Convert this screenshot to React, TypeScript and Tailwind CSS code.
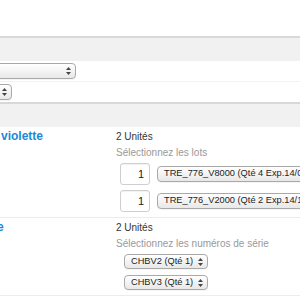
import React from 'react';

const Arrows = () => (
  <svg width="5" height="8" viewBox="0 0 5 8" className="shrink-0">
    <polygon points="0,3 2.5,0 5,3" fill="#444" />
    <polygon points="0,5 2.5,8 5,5" fill="#444" />
  </svg>
);

function MacSelect({
  label,
  className,
  arrows = true,
}: {
  label?: string;
  className: string;
  arrows?: boolean;
}) {
  return (
    <div
      className={`flex items-center justify-between shrink-0 rounded-[4px] border border-[#a9a9a9] bg-gradient-to-b from-white to-[#e8e8e8] shadow-[0_1px_0_rgba(0,0,0,0.04)] text-[9.25px] text-[#222] whitespace-nowrap overflow-hidden ${className}`}
    >
      <span className="pl-[6px] leading-none">{label}</span>
      {arrows && (
        <span className="pr-[4px] pl-[4px] flex items-center">
          <Arrows />
        </span>
      )}
    </div>
  );
}

function QtyInput() {
  return (
    <div className="w-[30px] h-[22px] shrink-0 rounded-[3px] border border-[#cfcfcf] shadow-[inset_0_1px_1px_rgba(0,0,0,0.06)] flex items-center justify-end pr-[5px] text-[11px] text-[#222]">
      1
    </div>
  );
}

export default function App() {
  const lots = ['TRE_776_V8000 (Qté 4 Exp.14/07/2015)', 'TRE_776_V2000 (Qté 2 Exp.14/12/2015)'];
  const series = ['CHBV2 (Qté 1)', 'CHBV3 (Qté 1)'];

  return (
    <div className="w-[300px] h-[300px] overflow-hidden bg-white font-['Liberation_Sans',Arial,sans-serif]">
      <div className="h-[36px]" />

      {/* Filters header */}
      <div className="h-[25px] border-t-2 border-[#d8d8d8] bg-[#f1f1f1]" />
      <div className="h-[21px] flex items-center border-b border-[#f2f2f2]">
        <MacSelect className="w-[100px] h-[16px] -ml-[24px]" />
      </div>
      <div className="h-[20px] flex items-center">
        <MacSelect className="w-[40px] h-[16px] -ml-[28px]" />
      </div>
      <div className="h-[25px] border-t-2 border-[#d8d8d8] bg-[#f1f1f1]" />

      {/* Product rows */}
      <div className="flex border-b border-[#ececec] pt-[1px] pb-[5px]">
        <div className="w-[116px] shrink-0 overflow-hidden">
          <div className="text-[12px] leading-[16px] font-bold text-[#1b8ad6] pl-[1px]">violette</div>
        </div>
        <div className="flex-1 min-w-0">
          <div className="text-[10px] leading-[17px] text-[#333]">2 Unités</div>
          <div className="text-[10px] leading-[16px] text-[#999]">Sélectionnez les lots</div>
          <div className="mt-[2px] ml-[4px] flex flex-col gap-[5px]">
            {lots.map((lot) => (
              <div key={lot} className="flex items-center gap-[7px]">
                <QtyInput />
                <MacSelect label={lot} className="w-[200px] h-[16px]" arrows={false} />
              </div>
            ))}
          </div>
        </div>
      </div>

      <div className="flex border-b border-[#ececec] pt-[1px] pb-[5px]">
        <div className="w-[116px] shrink-0 overflow-hidden">
          <div className="text-[12px] leading-[16px] font-bold text-[#1b8ad6] -ml-[3px]">e</div>
        </div>
        <div className="flex-1 min-w-0">
          <div className="text-[10px] leading-[17px] text-[#333]">2 Unités</div>
          <div className="text-[10px] leading-[16px] text-[#999]">Sélectionnez les numéros de série</div>
          <div className="mt-[2px] ml-[8px] flex flex-col gap-[6px]">
            {series.map((s) => (
              <MacSelect key={s} label={s} className="w-[84px] h-[15px]" />
            ))}
          </div>
        </div>
      </div>
    </div>
  );
}
